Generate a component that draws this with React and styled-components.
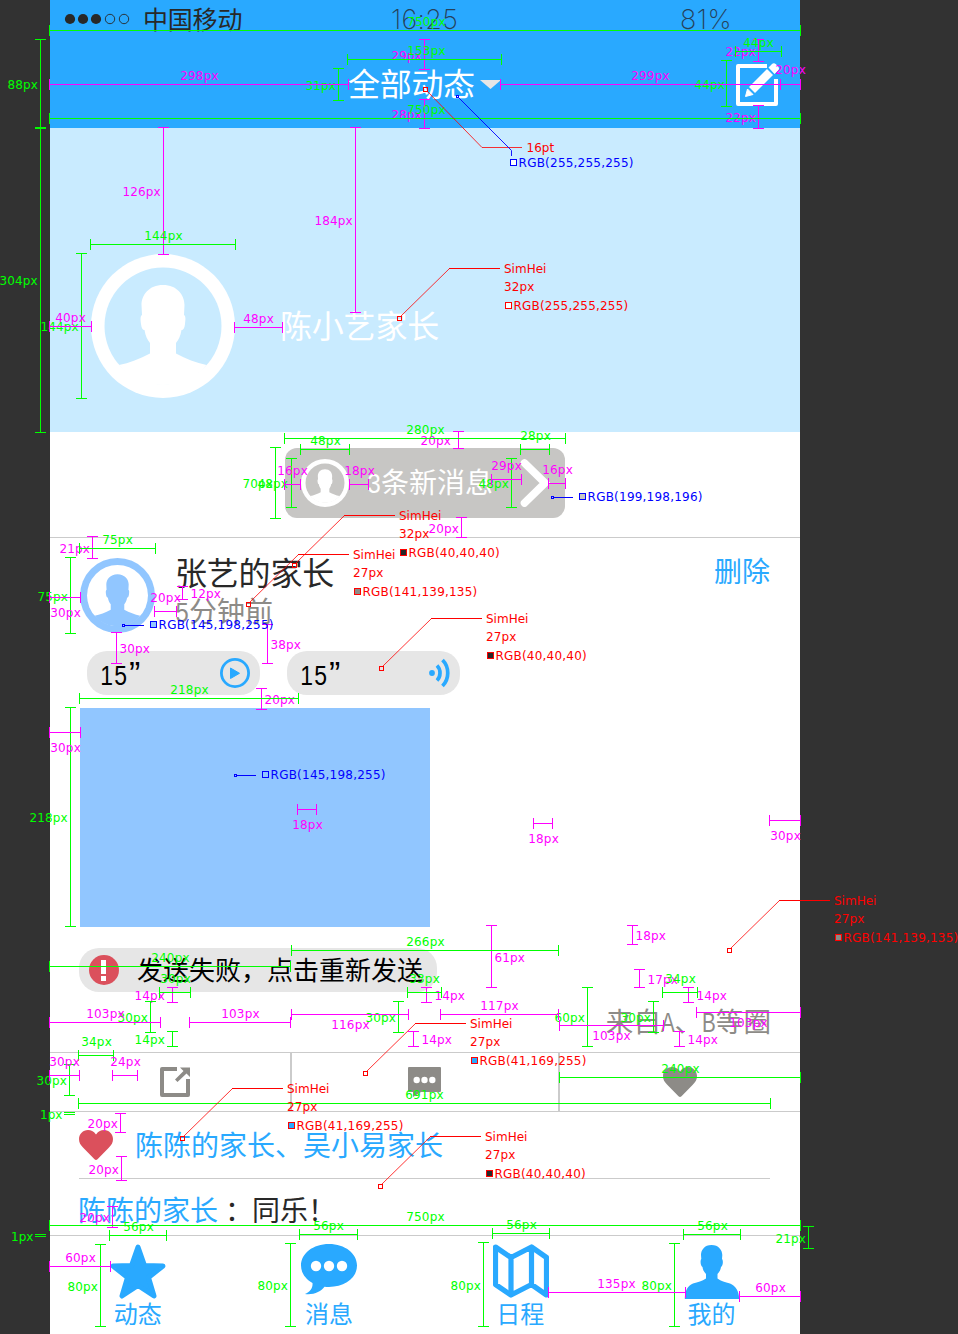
import React from 'react';
import styled, { createGlobalStyle } from 'styled-components';

const BLUE = '#29a9ff';
const INK = '#282828';
const GREY = '#8d8b87';
const RULE = '#cbcbcb';
const GREEN = '#00ff00';
const PINK = '#ff00ff';
const RED = '#ff0000';
const NAVY = '#0000ff';

const GlobalStyle = createGlobalStyle`
  * { box-sizing: border-box; }
  body { margin: 0; background: #323232; }
`;

const Page = styled.div`
  position: relative;
  width: 958px;
  height: 1334px;
  padding-left: 50px;
  overflow: hidden;
  background: #323232;
  font-family: 'Noto Sans CJK SC', sans-serif;
`;

const Phone = styled.main`
  display: flex;
  flex-direction: column;
  width: 750px;
  height: 1334px;
  overflow: hidden;
  background: #fff;
`;

const Txt = styled.span`
  display: block;
  white-space: nowrap;
  font-size: ${(p) => p.$size || 28}px;
  line-height: ${(p) => p.$lh || 32}px;
  color: ${(p) => p.$color || INK};
  letter-spacing: ${(p) => p.$track || 0}px;
`;

/* Latin characters condensed onto a half-width cell beside the Chinese ones */
const Half = styled.span`
  display: inline-flex;
  justify-content: center;
  width: ${(p) => p.$w || 14}px;
  line-height: 1;
  font-family: 'Liberation Sans', sans-serif;
  transform: scaleX(${(p) => p.$squeeze || 0.85});
`;

const SecondMark = styled.span`
  margin-left: 2px;
  font-family: 'Liberation Sans', sans-serif;
  font-size: 34px;
  line-height: 1;
`;

/* ---------- top area ---------- */

const StatusBar = styled.div`
  display: grid;
  grid-template-columns: 341px 289px 1fr;
  height: 40px;
  padding-top: 3px;
  background: ${BLUE};
`;

const Carrier = styled.div`
  display: flex;
  align-items: center;
  height: 32px;
  padding-left: 14px;
  gap: 13px;
`;

const CarrierName = styled(Txt)`
  margin-top: -3px;
`;

const StatusFigure = styled.span`
  font-family: Inter, sans-serif;
  font-weight: 200;
  font-size: 27px;
  line-height: 33px;
  letter-spacing: ${(p) => p.$track || 0}px;
  color: #26415a;
  white-space: nowrap;
`;

const NavBar = styled.header`
  display: flex;
  align-items: center;
  height: 88px;
  padding: 0 20px 0 298px;
  background: ${BLUE};
`;

const NavTitle = styled(Txt)`
  margin-top: -4px;
`;

const NavCaret = styled.svg`
  margin-left: 5px;
`;

const NavAction = styled.svg`
  margin-left: auto;
`;

const Cover = styled.section`
  display: flex;
  align-items: center;
  gap: 45px;
  height: 304px;
  padding: 92px 0 0 41px;
  background: #c9ebff;
  flex: none;
`;

const CoverName = styled(Txt)`
  margin-top: -5px;
`;

/* ---------- notice ---------- */

const NoticeRow = styled.section`
  display: flex;
  height: 106px;
  padding: 16px 0 0 235px;
  border-bottom: 1px solid ${RULE};
  flex: none;
`;

const Notice = styled.div`
  display: flex;
  align-items: center;
  width: 280px;
  height: 70px;
  padding: 0 15px 0 16px;
  border-radius: 12px;
  background: #c7c6c4;
`;

const NoticeText = styled(Txt)`
  margin: -3px 0 0 18px;
`;

const NoticeArrow = styled.svg`
  margin-left: auto;
`;

/* ---------- post ---------- */

const Post = styled.article`
  display: flex;
  flex-direction: column;
  height: 514px;
  padding: 20px 29px 0 30px;
  flex: none;
`;

const PostHead = styled.div`
  display: flex;
  height: 93px;
`;

const Author = styled.div`
  display: flex;
  flex-direction: column;
  gap: 6px;
  margin: -4px 0 0 20px;
`;

const DeleteLink = styled(Txt)`
  margin: -4px 1px 0 auto;
`;

const VoiceRow = styled.div`
  display: flex;
  gap: 27px;
  padding-left: 7px;
`;

const Voice = styled.div`
  display: flex;
  align-items: center;
  justify-content: space-between;
  width: 173px;
  height: 44px;
  padding: 0 ${(p) => p.$end || 10}px 0 13px;
  border-radius: 20px;
  background: #e6e6e6;
`;

const Photo = styled.div`
  width: 350px;
  height: 219px;
  margin-top: 13px;
  background: #91c6ff;
`;

const Failure = styled.div`
  display: flex;
  align-items: center;
  gap: 18px;
  width: 358px;
  height: 44px;
  margin: 21px 0 0 -1px;
  padding-left: 10px;
  border-radius: 20px;
  background: #e6e6e6;
`;

const FailureText = styled(Txt)`
  margin-top: -2px;
`;

const Origin = styled(Txt)`
  margin: 12px 0 0 auto;
`;

const Actions = styled.div`
  display: grid;
  grid-template-columns: 242px 268px 1fr;
  height: 60px;
  border-top: 1px solid ${RULE};
  border-bottom: 1px solid ${RULE};
  flex: none;
`;

const Action = styled.div`
  display: flex;
  align-items: center;
  justify-content: center;
  border-right: ${(p) => (p.$last ? 'none' : `2px solid ${RULE}`)};
  padding-left: ${(p) => p.$shift || 0}px;
`;

const Likes = styled.div`
  display: flex;
  align-items: center;
  gap: 22px;
  height: 67px;
  margin: 0 30px 0 29px;
  border-bottom: 1px solid ${RULE};
  flex: none;
`;

const LikeNames = styled(Txt)`
  margin-top: -2px;
`;

const Comment = styled.div`
  display: flex;
  align-items: center;
  height: 56px;
  padding: 4px 0 0 28px;
  flex: none;
`;

const Colon = styled(Txt)`
  width: 34px;
  padding-left: 7px;
`;

const TabBar = styled.nav`
  display: grid;
  grid-template-columns: repeat(4, 191.3px);
  height: 99px;
  border-top: 1px solid ${RULE};
  flex: none;
`;

const Tab = styled.div`
  display: flex;
  flex-direction: column;
  align-items: center;
  padding: 8px 15px 0 0;
`;

const TabIcon = styled.svg`
  display: block;
  flex: none;
`;

const TabName = styled(Txt)`
  margin: -3px 1px 0 0;
`;

/* ---------- measurement layer ---------- */

const Layer = styled.div`
  position: absolute;
  inset: 0;
  font-family: 'DejaVu Sans', sans-serif;
  font-size: 12px;
  line-height: 16px;
  pointer-events: none;
`;

const Note = styled.span`
  position: absolute;
  left: ${(p) => p.$x}px;
  top: ${(p) => p.$y - 3}px;
  color: ${(p) => p.$c};
  letter-spacing: ${(p) => p.$track || 0}px;
  white-space: nowrap;
`;

const HSpan = styled.i`
  position: absolute;
  left: ${(p) => p.$x}px;
  top: ${(p) => p.$y - 5}px;
  width: ${(p) => p.$w}px;
  height: 11px;
  border: solid ${(p) => p.$c};
  border-width: 0 1px;
  background: linear-gradient(${(p) => p.$c}, ${(p) => p.$c}) 0 5px / 100% 1px no-repeat;
`;

const VSpan = styled.i`
  position: absolute;
  left: ${(p) => p.$x - 5}px;
  top: ${(p) => p.$y}px;
  width: 11px;
  height: ${(p) => p.$h}px;
  border: solid ${(p) => p.$c};
  border-width: 1px 0;
  background: linear-gradient(${(p) => p.$c}, ${(p) => p.$c}) 5px 0 / 1px 100% no-repeat;
`;

const Swatch = styled.i`
  position: absolute;
  left: ${(p) => p.$x}px;
  top: ${(p) => p.$y}px;
  width: 7px;
  height: 7px;
  border: 1px solid ${(p) => p.$c};
  background: ${(p) => p.$fill};
`;

const Leaders = styled.svg`
  position: absolute;
  left: 0;
  top: 0;
`;

/* from x, to x, y, colour, label, label x, label y */
const H = [
  [49, 800, 30, GREEN, '750px', 407, 18],
  [49, 348, 84, PINK, '298px', 180, 72],
  [347, 501, 59, GREEN, '153px', 407, 47],
  [49, 800, 118, GREEN, '750px', 407, 106],
  [500, 800, 84, PINK, '299px', 631, 72],
  [735, 781, 51, GREEN, '44px', 743, 39],
  [780, 800, 84, PINK, '20px', 775, 66],
  [90, 235, 244, GREEN, '144px', 144, 232],
  [49, 91, 326, PINK, '40px', 55, 314],
  [234, 282, 327, PINK, '48px', 243, 315],
  [284, 565, 438, GREEN, '280px', 406, 426],
  [300, 349, 449, GREEN, '48px', 310, 437],
  [520, 549, 449, GREEN, '28px', 520, 432],
  [284, 300, 484, PINK, '16px', 277, 467],
  [349, 368, 484, PINK, '18px', 344, 467],
  [491, 521, 479, PINK, '29px', 491, 462],
  [548, 565, 483, PINK, '16px', 542, 466],
  [79, 155, 548, GREEN, '75px', 102, 536],
  [49, 80, 597, PINK, '30px', 50, 609],
  [154, 176, 611, PINK, '20px', 150, 594],
  [79, 298, 698, GREEN, '218px', 170, 686],
  [49, 80, 732, PINK, '30px', 50, 744],
  [297, 316, 809, PINK, '18px', 292, 821],
  [533, 552, 823, PINK, '18px', 528, 835],
  [769, 800, 820, PINK, '30px', 770, 832],
  [291, 558, 950, GREEN, '266px', 406, 938],
  [49, 290, 966, GREEN, '240px', 151, 954],
  [159, 190, 992, GREEN, '30px', 160, 975],
  [49, 160, 1022, PINK, '103px', 86, 1010],
  [189, 290, 1022, PINK, '103px', 221, 1010],
  [78, 113, 1055, GREEN, '34px', 81, 1038],
  [49, 79, 1075, PINK, '30px', 49, 1058],
  [112, 137, 1075, PINK, '24px', 110, 1058],
  [78, 770, 1103, GREEN, '691px', 405, 1091],
  [407, 441, 992, GREEN, '33px', 409, 975],
  [291, 408, 1014, PINK, '116px', 331, 1021],
  [440, 558, 1014, PINK, '117px', 480, 1002],
  [559, 663, 1025, PINK, '103px', 592, 1032],
  [662, 697, 992, GREEN, '34px', 665, 975],
  [696, 800, 1012, PINK, '103px', 729, 1019],
  [559, 800, 1077, GREEN, '240px', 661, 1065],
  [49, 800, 1225, GREEN, '750px', 406, 1213],
  [109, 166, 1235, GREEN, '56px', 123, 1223],
  [49, 110, 1266, PINK, '60px', 65, 1254],
  [299, 357, 1234, GREEN, '56px', 313, 1222],
  [492, 549, 1233, GREEN, '56px', 506, 1221],
  [548, 685, 1292, PINK, '135px', 597, 1280],
  [683, 740, 1234, GREEN, '56px', 697, 1222],
  [739, 800, 1296, PINK, '60px', 755, 1284],
];

/* x, from y, to y, colour, label, label x, label y */
const V = [
  [40, 39, 127, GREEN, '88px', 7, 81],
  [40, 128, 432, GREEN, '304px', -1, 277],
  [424, 39, 69, PINK, '29px', 391, 52],
  [338, 68, 100, GREEN, '31px', 305, 82],
  [424, 99, 128, PINK, '28px', 391, 111],
  [758, 39, 61, PINK, '22px', 725, 48],
  [726, 60, 106, GREEN, '44px', 694, 81],
  [758, 105, 128, PINK, '22px', 725, 114],
  [163, 127, 254, PINK, '126px', 122, 188],
  [355, 127, 312, PINK, '184px', 314, 217],
  [81, 253, 398, GREEN, '144px', 40, 323],
  [458, 431, 448, PINK, '20px', 420, 437],
  [275, 447, 518, GREEN, '70px', 242, 480],
  [291, 458, 507, GREEN, '48px', 257, 480],
  [511, 458, 507, GREEN, '48px', 478, 480],
  [461, 517, 537, PINK, '20px', 428, 525],
  [92, 536, 558, PINK, '21px', 59, 545],
  [70, 557, 633, GREEN, '75px', 37, 593],
  [182, 586, 599, PINK, '12px', 190, 590],
  [116, 632, 663, PINK, '30px', 119, 645],
  [267, 624, 663, PINK, '38px', 270, 641],
  [261, 688, 709, PINK, '20px', 264, 696],
  [70, 707, 926, GREEN, '218px', 29, 814],
  [491, 925, 987, PINK, '61px', 494, 954],
  [632, 925, 944, PINK, '18px', 635, 932],
  [172, 987, 1002, PINK, '14px', 134, 992],
  [150, 1001, 1032, GREEN, '30px', 117, 1014],
  [172, 1031, 1046, GREEN, '14px', 134, 1036],
  [69, 1064, 1095, GREEN, '30px', 36, 1077],
  [120, 1113, 1132, PINK, '20px', 87, 1120],
  [426, 987, 1002, PINK, '14px', 434, 992],
  [398, 1001, 1032, GREEN, '30px', 365, 1014],
  [413, 1031, 1046, PINK, '14px', 421, 1036],
  [587, 987, 1046, GREEN, '60px', 554, 1014],
  [639, 969, 987, PINK, '17px', 647, 976],
  [688, 987, 1002, PINK, '14px', 696, 992],
  [653, 1001, 1032, GREEN, '30px', 620, 1014],
  [679, 1031, 1046, PINK, '14px', 687, 1036],
  [121, 1156, 1180, PINK, '20px', 88, 1166],
  [112, 1206, 1227, PINK, '20px', 79, 1214],
  [100, 1244, 1326, GREEN, '80px', 67, 1283],
  [290, 1243, 1326, GREEN, '80px', 257, 1282],
  [483, 1242, 1326, GREEN, '80px', 450, 1282],
  [674, 1243, 1326, GREEN, '80px', 641, 1282],
  [808, 1226, 1248, GREEN, '21px', 775, 1235],
];

/* anchor x, anchor y, text x, first line y, size, rgb */
const FONTS = [
  [399, 318, 504, 265, '32px', '255,255,255'],
  [294, 565, 399, 512, '32px', '40,40,40'],
  [248, 604, 353, 551, '27px', '141,139,135'],
  [381, 668, 486, 615, '27px', '40,40,40'],
  [729, 950, 834, 897, '27px', '141,139,135'],
  [365, 1073, 470, 1020, '27px', '41,169,255'],
  [182, 1138, 287, 1085, '27px', '41,169,255'],
  [380, 1186, 485, 1133, '27px', '40,40,40'],
];

/* anchor x, anchor y, rgb */
const COLOURS = [
  [552, 497, '199,198,196'],
  [123, 625, '145,198,255'],
  [235, 775, '145,198,255'],
];

function Annotations() {
  return (
    <Layer>
      {V.map(([x, a, b, c, t, lx, ly], i) => (
        <React.Fragment key={i}>
          <VSpan $x={x} $y={a} $h={b - a + 1} $c={c} />
          <Note $x={lx + 0.4} $y={ly - 1} $c={c} $track={0.15}>{t}</Note>
        </React.Fragment>
      ))}
      {H.map(([a, b, y, c, t, lx, ly], i) => (
        <React.Fragment key={i}>
          <HSpan $x={a} $y={y} $w={b - a + 1} $c={c} />
          <Note $x={lx + 0.3} $y={ly - 1} $c={c} $track={0.15}>{t}</Note>
        </React.Fragment>
      ))}
      <Note $x={40} $y={1110} $c={GREEN}>1px</Note>
      <Note $x={11} $y={1232} $c={GREEN}>1px</Note>
      <Leaders width="958" height="1334" viewBox="0 0 958 1334" fill="none">
        <path d="M64 1112.5h11M64 1114.5h11M35 1234.5h11M35 1236.5h11" stroke={GREEN} />
        <g stroke={RED}>
          <path d="M427 91L482 147.5H522" strokeWidth=".8" />
          <rect x="423.5" y="87.5" width="4" height="4" />
          {FONTS.map(([x, y, tx, ty]) => (
            <React.Fragment key={x}>
              <path d={`M${x + 2} ${y - 2}L${tx - 54.5} ${ty + 3.5}`} strokeWidth=".8" />
              <path d={`M${tx - 55} ${ty + 3.5}H${tx - 4}`} />
              <rect x={x - 1.5} y={y - 1.5} width="4" height="4" />
            </React.Fragment>
          ))}
        </g>
        <g stroke={NAVY}>
          <path d="M458.500 97.500L511.500 150.500V156" strokeWidth=".9" />
          <rect x="456.500" y="95.500" width="2" height="2" />
          {COLOURS.map(([x, y]) => (
            <React.Fragment key={x}>
              <path d={`M${x + 2} ${y + 0.5}h19`} />
              <rect x={x - 0.5} y={y - 0.5} width="2" height="2" />
            </React.Fragment>
          ))}
        </g>
      </Leaders>
      <Note $x={526.5} $y={143} $c={RED}>16pt</Note>
      <Swatch $x={510} $y={159} $c={NAVY} $fill="#fff" />
      <Note $x={518.6} $y={158} $c={NAVY} $track={0.22}>RGB(255,255,255)</Note>
      {FONTS.map(([x, , tx, ty, size, rgb]) => (
        <React.Fragment key={x}>
          <Note $x={tx} $y={ty - 1} $c={RED}>SimHei</Note>
          <Note $x={tx} $y={ty + 17} $c={RED} $track={0.1}>{size}</Note>
          <Swatch $x={tx + 1} $y={ty + 37} $c={RED} $fill={`rgb(${rgb})`} />
          <Note $x={tx + 9.4} $y={ty + 36} $c={RED} $track={0.22}>{`RGB(${rgb})`}</Note>
        </React.Fragment>
      ))}
      {COLOURS.map(([x, y, rgb]) => (
        <React.Fragment key={x}>
          <Swatch $x={x + 27} $y={y - 4} $c={NAVY} $fill={`rgb(${rgb})`} />
          <Note $x={x + 35.6} $y={y - 5} $c={NAVY} $track={0.22}>{`RGB(${rgb})`}</Note>
        </React.Fragment>
      ))}
    </Layer>
  );
}

/* ---------- drawings ---------- */

const Avatar = ({ size, color, back }) => (
  <svg width={size} height={size} viewBox="0 0 144 144">
    <circle cx="72" cy="72" r="72" fill={color} />
    <circle cx="72" cy="72" r="58.5" fill={back} />
    <path
      fill={color}
      d="M72 31C58 31 50.500 41 50.500 51L51 61C49 62 49.500 66 50 70C50.500 74 51.500 76 53.500 76C54.500 82 56.500 86 59 89V99.500C49 105 38 109 28 111C38 124 54 131 72 131S106 124 115.500 111C105 108.500 95 105 85 99.500V89C87.500 86 89.500 82 90.500 76C92.500 76 93.500 74 94 70C94.500 66 95 62 93 61L93.500 51C93.500 41 86 31 72 31Z"
    />
  </svg>
);

const Heart = ({ color }) => (
  <svg width="34" height="30" viewBox="0 0 34 30">
    <path
      fill={color}
      d="M17 4.500C14.500 1 12 0 9 0C4 0 0 4 0 9C0 12.500 1.500 15 4 17.500L15.500 29.300Q17 30.500 18.500 29.300L30 17.500C32.500 15 34 12.500 34 9C34 4 30 0 25 0C22 0 19.500 1 17 4.500Z"
    />
  </svg>
);

const Duration = () => (
  <Txt $size={27} $color="#000">
    <Half $w={13.5}>1</Half>
    <Half $w={13.5}>5</Half>
    <SecondMark>”</SecondMark>
  </Txt>
);

export default function App() {
  return (
    <Page>
      <GlobalStyle />
      <Phone>
        <StatusBar>
          <Carrier>
            <svg width="66" height="12" viewBox="0 0 66 12">
              <g fill={INK}>
                <circle cx="6" cy="6" r="5.100" />
                <circle cx="19" cy="6" r="5.100" />
                <circle cx="32" cy="6" r="5.100" />
              </g>
              <g fill="none" stroke={INK} strokeWidth=".9">
                <circle cx="46" cy="6" r="4.700" />
                <circle cx="60" cy="6" r="4.700" />
              </g>
            </svg>
            <CarrierName $size={25} $track={-0.2}>中国移动</CarrierName>
          </Carrier>
          <StatusFigure $track={0.3}>16:25</StatusFigure>
          <StatusFigure $track={0.4}>81%</StatusFigure>
        </StatusBar>
        <NavBar>
          <NavTitle $size={32} $color="#fff" $track={-0.3}>全部动态</NavTitle>
          <NavCaret width="21" height="9" viewBox="0 0 21 9">
            <path d="M0 0H21L10.500 9Z" fill="#e6e6e6" />
          </NavCaret>
          <NavAction width="45" height="44" viewBox="0 0 45 44">
            <path d="M32 4H3V42H41V17" fill="none" stroke="#fff" strokeWidth="4" strokeLinejoin="round" />
            <path d="M10.500 34.500L12.500 27L18 32.500Z" fill="#fff" stroke="#fff" strokeLinejoin="round" />
            <path d="M14 25L32 7L38 13L20 31Z" fill="#fff" />
            <path d="M33.500 5.500L37 2Q39 .500 41 2.300L43.500 5Q45 7 43 8.700L39.500 12Z" fill="#fff" />
          </NavAction>
        </NavBar>
        <Cover>
          <Avatar size={144} color="#fff" back="#c9ebff" />
          <CoverName $size={32} $color="#fff" $track={-0.2}>陈小艺家长</CoverName>
        </Cover>
        <NoticeRow>
          <Notice>
            <Avatar size={48} color="#fff" back="#c7c6c4" />
            <NoticeText $color="#fff"><Half>3</Half>条新消息</NoticeText>
            <NoticeArrow width="30" height="48" viewBox="0 0 30 48">
              <path d="M4.500 4L25 24L4.500 44" fill="none" stroke="#fff" strokeWidth="7.600" strokeLinecap="round" />
            </NoticeArrow>
          </Notice>
        </NoticeRow>

        <Post>
          <PostHead>
            <Avatar size={75} color="#91c6ff" back="#fff" />
            <Author>
              <Txt $size={32} $lh={34} $track={-0.2}>张艺的家长</Txt>
              <Txt $color={GREY}><Half>5</Half>分钟前</Txt>
            </Author>
            <DeleteLink $color={BLUE}>删除</DeleteLink>
          </PostHead>
          <VoiceRow>
            <Voice>
              <Duration />
              <svg width="30" height="30" viewBox="0 0 30 30">
                <circle cx="15" cy="15" r="13.600" fill="none" stroke={BLUE} strokeWidth="2.800" />
                <path d="M10.500 10V20.500L19.500 15.300Z" fill={BLUE} stroke={BLUE} strokeLinejoin="round" />
              </svg>
            </Voice>
            <Voice $end={9}>
              <Duration />
              <svg width="22" height="30" viewBox="0 0 22 30">
                <circle cx="3" cy="15" r="2.900" fill={BLUE} />
                <path d="M8 7.500C12 11.500 12 18.500 8 22.500M13.500 2C20.500 9 20.500 21 13.500 28" fill="none" stroke={BLUE} strokeWidth="3.700" />
              </svg>
            </Voice>
          </VoiceRow>
          <Photo />
          <Failure>
            <svg width="30" height="30" viewBox="0 0 30 30">
              <circle cx="15" cy="15" r="15" fill="#db505c" />
              <path d="M12 5H17V19H12ZM12 21H17V26H12Z" fill="#fff" />
            </svg>
            <FailureText $size={26} $color="#000">发送失败，点击重新发送</FailureText>
          </Failure>
          <Origin $size={27.6} $color={GREY}>
            来自<Half $squeeze={0.75} $w={13.6}>A</Half>、<Half $squeeze={0.75} $w={13.6}>B</Half>等圈
          </Origin>
        </Post>

        <Actions>
          <Action $shift={10}>
            <svg width="30" height="30" viewBox="0 0 30 30">
              <path d="M17 2H2V28H28V12" fill="none" stroke={GREY} strokeWidth="4" strokeLinejoin="round" />
              <path d="M20 .500H30V10L26.500 6.500L17.500 15L15 12.500L23.500 4Z" fill={GREY} />
            </svg>
          </Action>
          <Action>
            <svg width="34" height="30" viewBox="0 0 34 30">
              <path d="M1 0H32Q33 0 33 1V24Q33 25 32 25H13L5 30V25H1Q0 25 0 24V1Q0 0 1 0Z" fill={GREY} />
              <g fill="#fff">
                <circle cx="8.700" cy="13" r="3.200" />
                <circle cx="16.500" cy="13" r="3.200" />
                <circle cx="24.300" cy="13" r="3.200" />
              </g>
            </svg>
          </Action>
          <Action $last>
            <Heart color={GREY} />
          </Action>
        </Actions>
        <Likes>
          <Heart color="#db505c" />
          <LikeNames $color={BLUE}>陈陈的家长、吴小易家长</LikeNames>
        </Likes>
        <Comment>
          <Txt $color={BLUE}>陈陈的家长</Txt>
          <Colon>：</Colon>
          <Txt>同乐！</Txt>
        </Comment>
        <TabBar>
          <Tab>
            <TabIcon width="56" height="56" viewBox="0 0 56 56">
              <path
                d="M28 3L34.500 21.500L53 22L38.500 33.500L44 52L28 41.500L12 52L17.500 33.500L3 22L21.500 21.500Z"
                fill={BLUE}
                stroke={BLUE}
                strokeWidth="5"
                strokeLinejoin="round"
              />
            </TabIcon>
            <TabName $size={24} $color={BLUE}>动态</TabName>
          </Tab>
          <Tab>
            <TabIcon width="56" height="56" viewBox="0 0 56 56">
              <path d="M28 0C12 0 0 9.500 0 21.500C0 29 4.500 35 11.500 39C12 44 9 48 4 50C13 51 20 47.500 23.500 42.700C41 44.500 56 35.500 56 21.500C56 9.500 44 0 28 0Z" fill={BLUE} />
              <g fill="#fff">
                <circle cx="15" cy="22" r="5.200" />
                <circle cx="28" cy="22" r="5.200" />
                <circle cx="41" cy="22" r="5.200" />
              </g>
            </TabIcon>
            <TabName $size={24} $color={BLUE}>消息</TabName>
          </Tab>
          <Tab>
            <TabIcon width="56" height="56" viewBox="0 0 56 56">
              <path d="M2.500 3L18 13.500L38.500 3L53.500 13.500V51L38.500 40.500L18 51L2.500 40.500ZM18 13.500V51M38.500 3V40.500" fill="none" stroke={BLUE} strokeWidth="5.200" strokeLinejoin="round" />
            </TabIcon>
            <TabName $size={24} $color={BLUE}>日程</TabName>
          </Tab>
          <Tab>
            <TabIcon width="56" height="56" viewBox="0 0 56 56">
              <path
                fill={BLUE}
                d="M27.500 1C20.500 1 17 6 17 11L17.300 15C16 16.500 16.500 22 18.500 23C19 26 20 28 22 30V34.500C18 37 14 38 9 39.500C3.500 41.500 1 47 .800 55H55.200C55 47 51.500 41.500 46 39.500C41 38 37 37 33.500 34.500V30C35.500 28 36.500 26 37 23C39 22 39.500 16.500 38 15L38.300 11C38.300 6 34.500 1 27.500 1Z"
              />
            </TabIcon>
            <TabName $size={24} $color={BLUE}>我的</TabName>
          </Tab>
        </TabBar>
      </Phone>
      <Annotations />
    </Page>
  );
}
